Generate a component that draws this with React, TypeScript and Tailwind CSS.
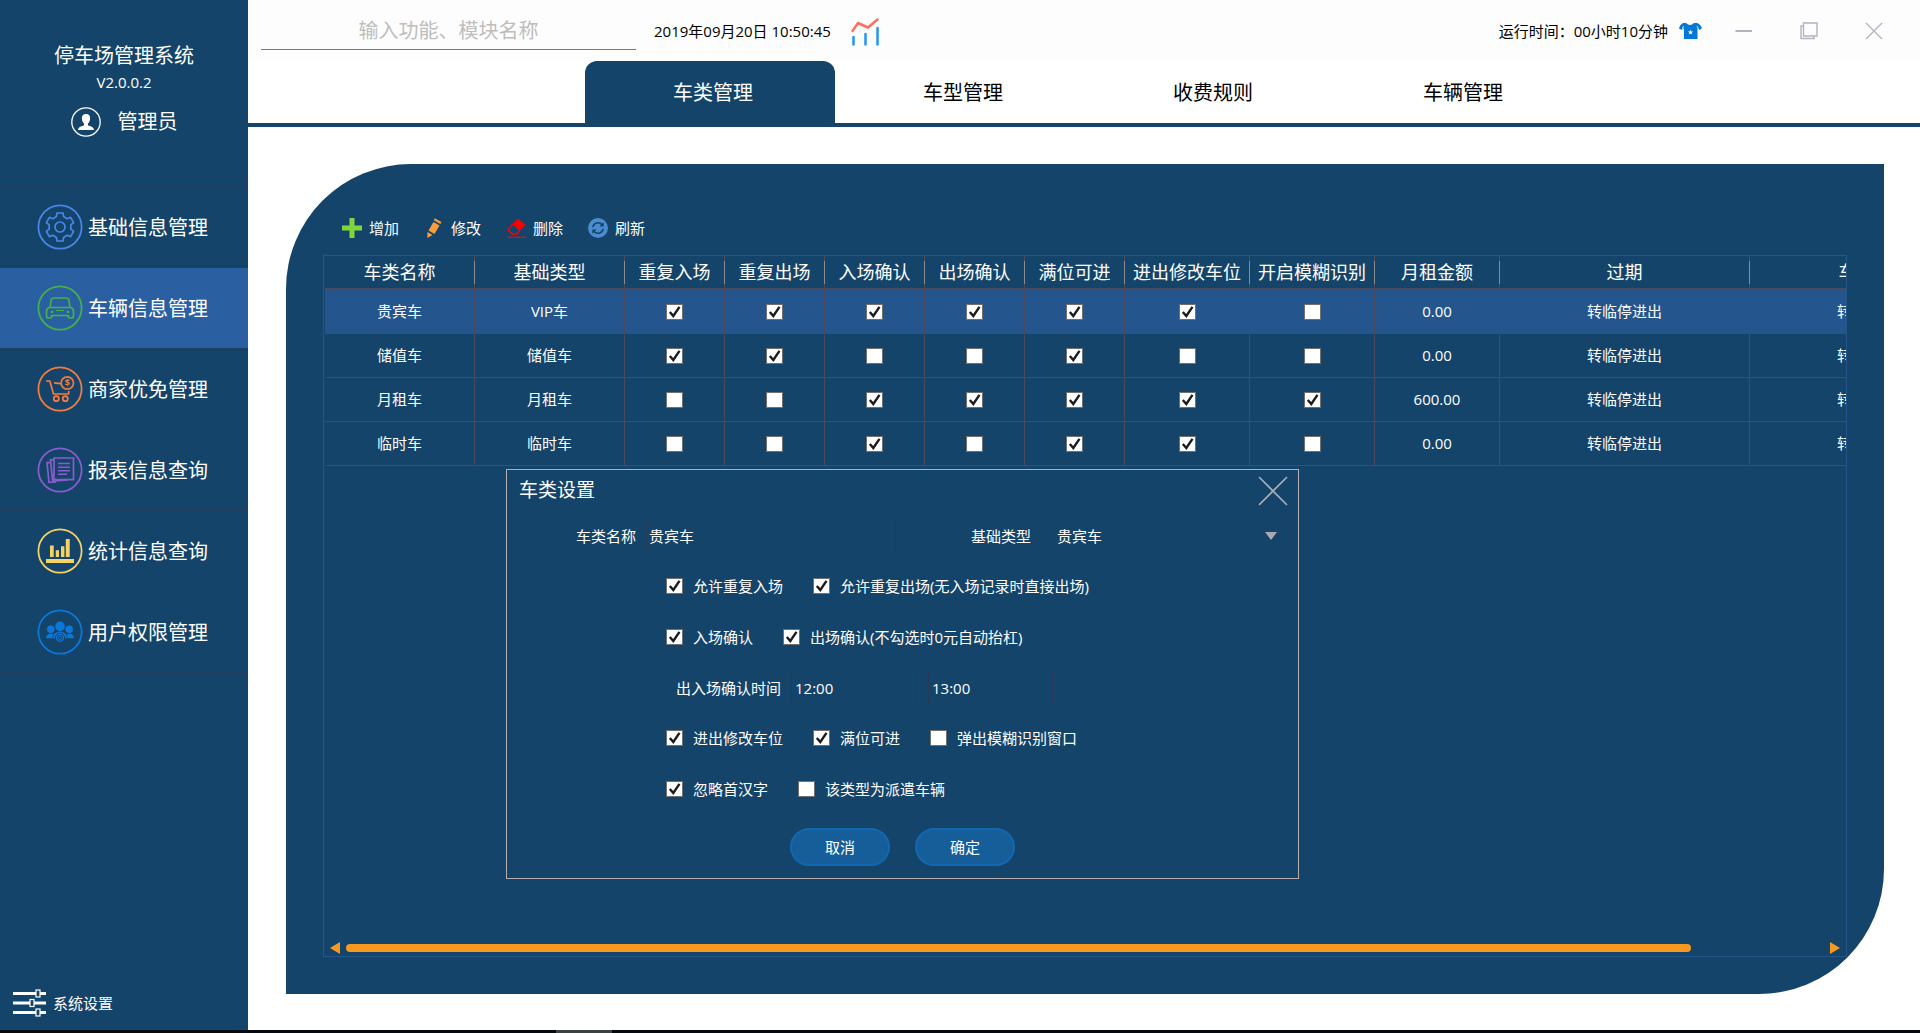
import React, { useId } from "react";

/* ---------- sidebar icons ---------- */

function RingIcon({ color, children }: { color: string; children: React.ReactNode }) {
  return (
    <svg viewBox="0 0 46 46" className="size-[46px] shrink-0" fill="none" stroke={color} strokeWidth="1.7" aria-hidden="true">
      <circle cx="23" cy="23" r="21.6" strokeWidth="1.8" />
      {children}
    </svg>
  );
}

const GearIcon = () => (
  <RingIcon color="#4a86e8">
    <g transform="translate(23 23)" strokeLinejoin="round">
      <path d="M-3 -14H3L3.6 -10.4L7.2 -8.3L10.6 -9.6L13.6 -4.4L10.8 -2.1V2.1L13.6 4.4L10.6 9.6L7.2 8.3L3.6 10.4L3 14H-3L-3.6 10.4L-7.2 8.3L-10.6 9.6L-13.6 4.4L-10.8 2.1V-2.1L-13.6 -4.4L-10.6 -9.6L-7.2 -8.3L-3.6 -10.4Z" />
      <circle r="5" />
    </g>
  </RingIcon>
);

const CarIcon = () => (
  <RingIcon color="#44b04a">
    <path d="M13 22.5L14 15.5Q14.4 13 17 13H29Q31.6 13 32 15.5L33 22.5" />
    <path d="M12.5 22.5Q9.5 23 9.5 26.5V31q0 2 2 2h1.5q1.5 0 2-2.5h16q.5 2.5 2 2.5h1.5q2 0 2-2v-4.500q0-3.500-3-4z" />
    <path d="M19 25.5H27" strokeWidth="1.2" />
    <circle cx="15" cy="27" r="1.3" fill="#44b04a" stroke="none" />
    <circle cx="31" cy="27" r="1.3" fill="#44b04a" stroke="none" />
  </RingIcon>
);

const CartIcon = () => (
  <RingIcon color="#f47b42">
    <path d="M9 15H12.8L16.5 28H31.5L32 25" />
    <path d="M17 16.8L24 17.6" />
    <circle cx="30.3" cy="17" r="6.200" />
    <text x="30.3" y="20.2" fontSize="9" fontWeight="700" textAnchor="middle" fill="#f47b42" stroke="none">
      $
    </text>
    <circle cx="19.3" cy="32.7" r="2.5" />
    <circle cx="28.3" cy="32.7" r="2.5" />
  </RingIcon>
);

const ReportIcon = () => (
  <RingIcon color="#8a5ccc">
    <path d="M17 11H36.5V32.6H17Z" />
    <path d="M17 12.800H13.5L15.600 34L31 33M13.500 15.600H10L12 35.400L19 34.800" />
    <path d="M21 16.500H33M21 20.200H33M21 23.800H33M21 27.300H30" strokeWidth="1.500" />
  </RingIcon>
);

const StatsIcon = () => (
  <RingIcon color="#f5d264">
    <g fill="#f5d264" stroke="none">
      <path d="M13 17.600H16.700V29H13ZM18.800 22.300H22V29H18.800ZM24 18.300H27.400V29H24ZM28.800 11H32.700V29H28.800ZM9 31H37V35H9Z" />
    </g>
  </RingIcon>
);

const UsersIcon = () => (
  <RingIcon color="#0b78d8">
    <g fill="#0b78d8" stroke="none">
      <circle cx="23" cy="17.300" r="4.800" />
      <circle cx="13.800" cy="20.300" r="3.800" />
      <circle cx="32.200" cy="20.300" r="3.800" />
      <path d="M9 29.300Q9.300 24.800 13.500 24.800L16.500 25.500L15 29.300ZM37 29.300Q36.700 24.800 32.500 24.800L29.500 25.500L31 29.300Z" />
      <path d="M16 29.300Q16 22.800 23 22.800Q30 22.800 30 29.300Z" />
    </g>
    <circle cx="23" cy="28.800" r="4.600" fill="#0b78d8" stroke="#15446a" strokeWidth="1" />
    <circle cx="23" cy="28.800" r="2.600" stroke="#15446a" strokeWidth=".9" />
    <path d="M23 27.300V30.300M21.500 28.800H24.500" stroke="#15446a" strokeWidth=".9" />
  </RingIcon>
);

const AvatarIcon = () => (
  <svg viewBox="0 0 30 30" className="size-[30px]" aria-hidden="true">
    <circle cx="15" cy="15" r="14.200" fill="none" stroke="#fff" strokeWidth="1.300" />
    <path fill="#fff" d="M15 7C12 7 10.700 9 10.900 11.600C11 14 12 15.600 13 16.600V18.200C11 19.300 7.300 19.600 7 23H23C22.700 19.600 19 19.300 17 18.200V16.600C18 15.600 19 14 19.100 11.600C19.300 9 18 7 15 7Z" />
  </svg>
);

const SlidersIcon = () => (
  <svg viewBox="0 0 33 28" className="h-7 w-[33px]" aria-hidden="true">
    <path d="M0 4.500H33M0 14H33M0 23.500H33" stroke="#fff" strokeWidth="2.800" />
    <g fill="#15446a" stroke="#fff" strokeWidth="1.200">
      <rect x="23" y="1" width="4" height="7" />
      <rect x="17" y="10.500" width="4" height="7" />
      <rect x="23" y="20" width="4" height="7" />
    </g>
  </svg>
);

/* ---------- title bar icons ---------- */

const TrendIcon = () => (
  <svg viewBox="0 0 28 28" className="size-7" fill="none" strokeWidth="2.500" strokeLinecap="round" strokeLinejoin="round" aria-hidden="true">
    <path stroke="#2196f3" d="M2.500 19V26.500M14.500 16V26.500M26.500 10V26.500" />
    <path stroke="#ff6f61" d="M1.500 13L7 5L17 9.500L26.500 1.500" />
  </svg>
);

const ShirtIcon = () => (
  <svg viewBox="0 0 24 18" className="h-[18px] w-6" aria-hidden="true">
    <path fill="#0078d7" d="M8 1Q12 5 16 1H19Q21.500 1.500 24 6L21.500 8.200L19.500 6V17H6V6L4 8.200L1 6.500Q2 2 5.500 1Z" />
    <path stroke="#fff" strokeWidth=".8" d="M5.500 4L3.800 8.500M19 4L21.300 8.500" />
    <path fill="#fff" d="M12.500 7.500L13.200 9.400L15.200 9.500L13.600 10.700L14.200 12.600L12.500 11.500L10.800 12.600L11.400 10.700L9.800 9.500L11.800 9.400Z" />
  </svg>
);

const windowButtons = [
  { label: "最小化", d: "M0.500 9H17", width: 2 },
  { label: "还原", d: "M3.500 1H17V14H3.500ZM3 4H1V16.500H14V14.500", width: 1.4 },
  { label: "关闭", d: "M1 1L17 17M17 1L1 17", width: 1.3 },
];

/* ---------- toolbar icons ---------- */

const PlusIcon = () => (
  <svg viewBox="0 0 20 20" className="size-5" aria-hidden="true">
    <path fill="#7ed63a" d="M7.500 0H12.500V7.500H20V12.500H12.500V20H7.500V12.500H0V7.500H7.500Z" />
  </svg>
);

const PencilIcon = () => (
  <svg viewBox="0 0 20 20" className="size-5" fill="#fb9d3c" aria-hidden="true">
    <path d="M9.500 4L15.500 7.400L10.500 16L4.500 12.500Z" />
    <path d="M10.800 0.300L17.500 4L16.300 6L9.800 2.200Z" />
    <path d="M3.500 14L8.500 17L3.300 20Z" />
  </svg>
);

const EraserIcon = () => (
  <svg viewBox="0 0 20 20" className="size-5" aria-hidden="true">
    <path fill="#fb0000" d="M12 0.500L19.500 7L13.500 13L6.500 6Z" />
    <path fill="none" stroke="#fb0000" strokeWidth="1.400" strokeLinejoin="round" d="M7 6L2 11.800L6 16H10.500L14 12.500" />
    <path stroke="#fb0000" strokeWidth="1.300" d="M1.500 19.300H20" />
  </svg>
);

const RefreshIcon = () => (
  <svg viewBox="0 0 20 20" className="size-5" aria-hidden="true">
    <circle cx="10" cy="10" r="10" fill="#4b8ccf" />
    <g fill="none" stroke="#15446a" strokeWidth="1.600">
      <path d="M4.800 9.200A5.300 5.300 0 0 1 14 6.600" />
      <path d="M15.200 10.800A5.300 5.300 0 0 1 6 13.400" />
    </g>
    <path fill="#15446a" d="M15.700 4.300V8.600H11.400ZM4.300 15.700V11.400H8.600Z" />
  </svg>
);

/* ---------- data ---------- */

const navItems = [
  { label: "基础信息管理", Icon: GearIcon },
  { label: "车辆信息管理", Icon: CarIcon, active: true },
  { label: "商家优免管理", Icon: CartIcon },
  { label: "报表信息查询", Icon: ReportIcon },
  { label: "统计信息查询", Icon: StatsIcon },
  { label: "用户权限管理", Icon: UsersIcon },
];

const tabs = ["车类管理", "车型管理", "收费规则", "车辆管理"];

const tools = [
  { label: "增加", Icon: PlusIcon },
  { label: "修改", Icon: PencilIcon },
  { label: "删除", Icon: EraserIcon },
  { label: "刷新", Icon: RefreshIcon },
];

const columns = [
  { title: "车类名称", width: "w-[150px]" },
  { title: "基础类型", width: "w-[150px]" },
  { title: "重复入场", width: "w-[100px]" },
  { title: "重复出场", width: "w-[100px]" },
  { title: "入场确认", width: "w-[100px]" },
  { title: "出场确认", width: "w-[100px]" },
  { title: "满位可进", width: "w-[100px]" },
  { title: "进出修改车位", width: "w-[125px]" },
  { title: "开启模糊识别", width: "w-[125px]" },
  { title: "月租金额", width: "w-[125px]" },
  { title: "过期", width: "w-[250px]" },
  { title: "车位过期", width: "w-[250px]" },
];

const rows = [
  { name: "贵宾车", type: "VIP车", flags: [1, 1, 1, 1, 1, 1, 0], fee: "0.00" },
  { name: "储值车", type: "储值车", flags: [1, 1, 0, 0, 1, 0, 0], fee: "0.00" },
  { name: "月租车", type: "月租车", flags: [0, 0, 1, 1, 1, 1, 1], fee: "600.00" },
  { name: "临时车", type: "临时车", flags: [0, 0, 1, 0, 1, 1, 0], fee: "0.00" },
];

/* ---------- controls ---------- */

function Tick({ checked, ...rest }: { checked: boolean } & React.InputHTMLAttributes<HTMLInputElement>) {
  return (
    <span className="relative block h-4 w-[17px] shrink-0">
      <input
        type="checkbox"
        defaultChecked={checked}
        className="peer block h-4 w-[17px] appearance-none border border-[#707070] bg-white"
        {...rest}
      />
      <svg viewBox="0 0 17 16" className="pointer-events-none absolute inset-0 hidden h-4 w-[17px] peer-checked:block" fill="none" stroke="#1c1c1c" strokeWidth="2.400" aria-hidden="true">
        <path d="M3.800 8L7.300 12L13.500 2.800" />
      </svg>
    </span>
  );
}

function CheckField({ label, checked = false }: { label: string; checked?: boolean }) {
  const id = useId();
  return (
    <div className="flex items-center gap-2.5">
      <Tick id={id} checked={checked} />
      <label htmlFor={id}>{label}</label>
    </div>
  );
}

function Sidebar() {
  return (
    <aside className="flex w-[248px] shrink-0 flex-col bg-[#15446a] text-white">
      <div className="flex h-[186px] flex-col items-center pt-[42px]">
        <h1 className="text-xl leading-7">停车场管理系统</h1>
        <p className="leading-6">V2.0.0.2</p>
        <div className="mt-3 flex items-center gap-[17px] text-xl leading-8">
          <AvatarIcon />
          <span>管理员</span>
        </div>
      </div>
      <nav className="border-b border-[#1f3f5c]">
        {navItems.map(({ label, Icon, active }) => (
          <a
            key={label}
            href="#"
            aria-current={active ? "page" : undefined}
            className={`flex h-[81px] items-center gap-[5px] border-t border-[#1f3f5c] pl-[37px] text-xl ${active ? "bg-[#2a60a2]" : ""}`}
          >
            <Icon />
            <span className="pt-0.5">{label}</span>
          </a>
        ))}
      </nav>
      <a href="#" className="mt-auto mb-[13px] flex items-center gap-[7px] pl-[13px]">
        <SlidersIcon />
        系统设置
      </a>
    </aside>
  );
}

function TitleBar() {
  return (
    <header className="flex h-[61px] items-start bg-[#fdfdfd] pl-[13px] pr-3.5 text-black">
      <input
        aria-label="搜索"
        placeholder="输入功能、模块名称"
        className="mt-3 h-[38px] w-[375px] border-b border-[#7a7a7a] bg-transparent text-center text-xl outline-none placeholder:text-[#bdbdbd]"
      />
      <time className="ml-[18px] mt-[19px] leading-6">2019年09月20日 10:50:45</time>
      <span className="ml-5 mt-[18px]">
        <TrendIcon />
      </span>
      <div className="ml-auto flex items-start">
        <span className="mt-[19px] leading-6">运行时间：00小时10分钟</span>
        <button type="button" aria-label="皮肤" className="ml-2.5 mt-[22px]">
          <ShirtIcon />
        </button>
        <div className="ml-[9px] flex">
          {windowButtons.map(({ label, d, width }) => (
            <button key={label} type="button" aria-label={label} className="flex h-[61px] w-[65px] items-center justify-center">
              <svg viewBox="0 0 18 18" className="size-[18px]" fill="none" stroke="#b0b4c0" strokeWidth={width} aria-hidden="true">
                <path d={d} />
              </svg>
            </button>
          ))}
        </div>
      </div>
    </header>
  );
}

function SettingsDialog() {
  const id = useId();
  const field = "border border-[#2a3a56] bg-transparent outline-none";
  return (
    <section
      role="dialog"
      aria-label="车类设置"
      className="absolute left-[182px] top-[213px] flex w-[793px] flex-col border border-[#b5aeb0] bg-[#15446a] pb-3 leading-6"
    >
      <div className="flex h-[47px] items-start justify-between pl-3 pr-2.5 pt-1.5">
        <h2 className="text-[19px] leading-7">车类设置</h2>
        <button type="button" aria-label="关闭对话框">
          <svg viewBox="0 0 30 30" className="size-[30px]" stroke="#a9aeb8" strokeWidth="1.600" aria-hidden="true">
            <path d="M1 1L29 29M29 1L1 29" />
          </svg>
        </button>
      </div>
      <div className="flex items-center pl-[69px] pr-[7px]">
        <label htmlFor={`${id}-name`}>车类名称</label>
        <input id={`${id}-name`} defaultValue="贵宾车" className={`${field} ml-2.5 h-[37px] w-[250px] px-0.5`} />
        <label htmlFor={`${id}-type`} className="ml-auto">
          基础类型
        </label>
        <div className="relative ml-2.5">
          <select id={`${id}-type`} defaultValue="贵宾车" className="block h-[37px] w-[250px] appearance-none border border-[#1f4063] bg-[#15446a] px-[15px] outline-none">
            <option>贵宾车</option>
            <option>储值车</option>
            <option>月租车</option>
            <option>临时车</option>
          </select>
          <svg viewBox="0 0 12 8" className="pointer-events-none absolute right-3.5 top-[15px] h-2 w-3" fill="#a9a9b0" aria-hidden="true">
            <path d="M0 0H12L6 8Z" />
          </svg>
        </div>
      </div>
      <div className="mt-5 flex gap-[30px] pl-[159px]">
        <CheckField label="允许重复入场" checked />
        <CheckField label="允许重复出场(无入场记录时直接出场)" checked />
      </div>
      <div className="mt-[27px] flex gap-[30px] pl-[159px]">
        <CheckField label="入场确认" checked />
        <CheckField label="出场确认(不勾选时0元自动抬杠)" checked />
      </div>
      <div className="mt-5 flex items-center pl-[169px]">
        <label htmlFor={`${id}-from`}>出入场确认时间</label>
        <input id={`${id}-from`} defaultValue="12:00" className={`${field} ml-2.5 h-[37px] w-[125px] px-[3px]`} />
        <input aria-label="结束时间" defaultValue="13:00" className={`${field} ml-3 h-[37px] w-[125px] px-[3px]`} />
      </div>
      <div className="mt-5 flex gap-[30px] pl-[159px]">
        <CheckField label="进出修改车位" checked />
        <CheckField label="满位可进" checked />
        <CheckField label="弹出模糊识别窗口" />
      </div>
      <div className="mt-[27px] flex gap-[30px] pl-[159px]">
        <CheckField label="忽略首汉字" checked />
        <CheckField label="该类型为派遣车辆" />
      </div>
      <div className="mt-[27px] flex gap-[25px] pl-[283px]">
        {["取消", "确定"].map((label) => (
          <button key={label} type="button" className="h-[38px] w-[100px] rounded-full border-2 border-[#1168b0] bg-[#155e99]">
            {label}
          </button>
        ))}
      </div>
    </section>
  );
}

function CategoryTable() {
  const cell = "border-r border-b border-[#4b4a5c] p-0";
  return (
    <table className="ml-px w-[1675px] table-fixed border-separate border-spacing-0 text-center">
      <thead>
        <tr>
          {columns.map(({ title, width }) => (
            <th key={title} scope="col" className={`relative h-[34px] border-b-2 border-r border-[#4b4a5c] p-0 text-lg leading-7 font-normal whitespace-nowrap ${width}`}>
              {title}
              <span className="absolute -right-px top-[5px] bottom-1 w-px bg-[#8d8a8c]" />
            </th>
          ))}
        </tr>
      </thead>
      <tbody>
        {rows.map((row, i) => (
          <tr key={row.name} className={i === 0 ? "bg-[#24568d]" : ""}>
            <td className={`h-11 ${cell}`}>{row.name}</td>
            <td className={cell}>{row.type}</td>
            {row.flags.map((flag, k) => (
              <td key={k} className={cell}>
                <div className="flex justify-center">
                  <Tick checked={flag === 1} aria-label={`${row.name} ${columns[k + 2].title}`} />
                </div>
              </td>
            ))}
            <td className={cell}>{row.fee}</td>
            <td className={cell}>转临停进出</td>
            <td className={cell}>转临停进出</td>
          </tr>
        ))}
      </tbody>
    </table>
  );
}

export default function App() {
  return (
    <div className="flex min-h-screen flex-col bg-white font-['Open_Sans','Noto_Sans_CJK_SC',sans-serif] text-[15px]">
      <div className="flex flex-1">
        <Sidebar />
        <main className="flex min-w-0 flex-1 flex-col">
          <TitleBar />
          <nav className="flex justify-center border-b-4 border-[#15446a] pl-0.5">
            {tabs.map((tab, i) => (
              <a
                key={tab}
                href="#"
                aria-current={i === 0 ? "page" : undefined}
                className={`flex h-[62px] w-[250px] items-center justify-center rounded-t-xl pl-1.5 pt-0.5 text-xl ${i === 0 ? "bg-[#15446a] text-white" : "text-black"}`}
              >
                {tab}
              </a>
            ))}
          </nav>
          <section className="mt-[37px] mr-9 mb-9 ml-[38px] flex flex-1 flex-col rounded-tl-[125px] rounded-br-[125px] bg-[#15446a] pt-[50px] pr-[37px] pb-[37px] pl-[37px] text-white">
            <div className="flex h-[41px] items-start gap-[25px] pl-[19px]">
              {tools.map(({ label, Icon }) => (
                <button key={label} type="button" className="flex items-center gap-[7px] leading-7">
                  <Icon />
                  {label}
                </button>
              ))}
            </div>
            <div className="relative flex flex-1 flex-col border border-[#24568d]">
              <div className="overflow-hidden">
                <CategoryTable />
              </div>
              <SettingsDialog />
              <div className="mt-auto flex h-4 items-center gap-1.5 px-1.5">
                <button type="button" aria-label="向左滚动">
                  <svg viewBox="0 0 10 12" className="block h-3 w-2.5" fill="#f7991f" aria-hidden="true">
                    <path d="M10 0V12L0 6Z" />
                  </svg>
                </button>
                <div className="flex-1">
                  <div className="h-2 w-[91%] rounded-full bg-[#f7991f]" />
                </div>
                <button type="button" aria-label="向右滚动">
                  <svg viewBox="0 0 10 12" className="block h-3 w-2.5" fill="#f7991f" aria-hidden="true">
                    <path d="M0 0V12L10 6Z" />
                  </svg>
                </button>
              </div>
            </div>
          </section>
        </main>
      </div>
      <div className="flex h-[3px] bg-[#04080f]">
        <div className="ml-[556px] w-14 bg-[#3a4244]" />
      </div>
    </div>
  );
}
